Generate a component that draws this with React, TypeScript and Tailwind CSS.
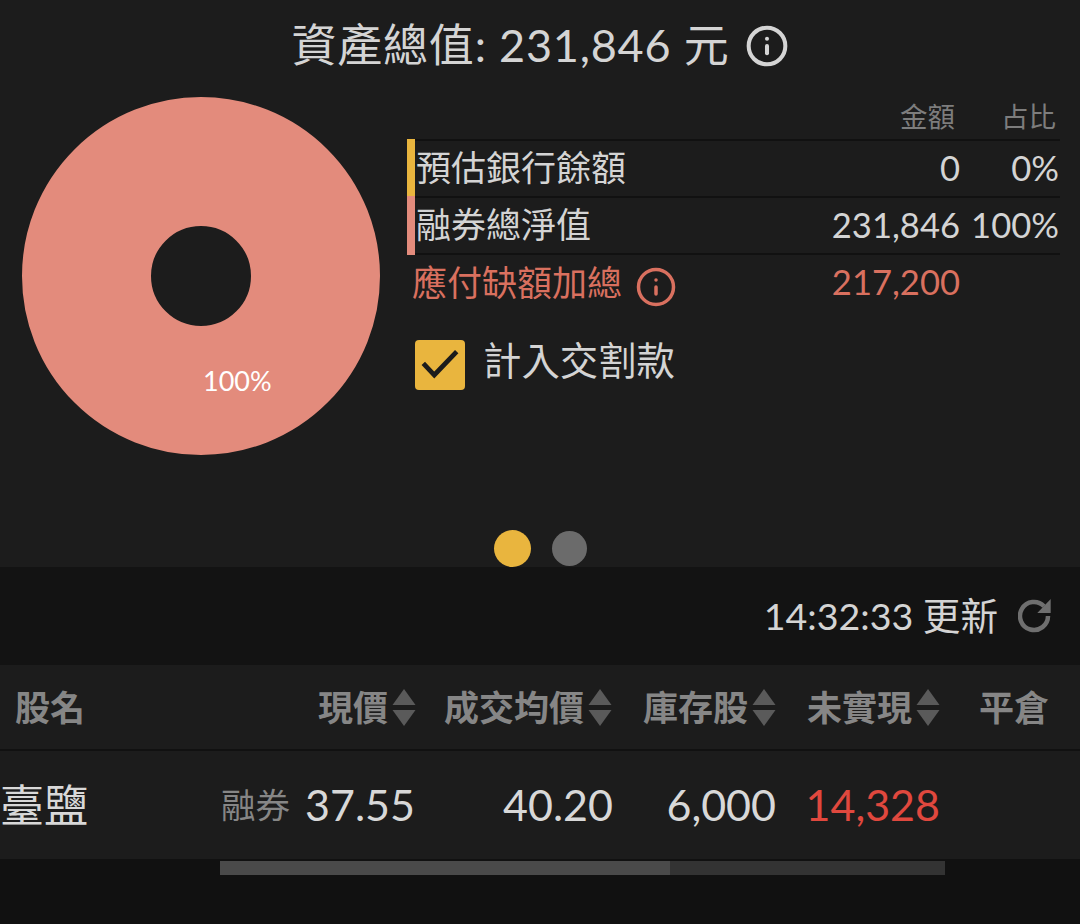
import { Info } from "lucide-react"

const font = "font-['Lato','Noto_Sans_CJK_TC',sans-serif]"

const columns = [
  { label: "現價", value: "37.55", valueClass: "text-[#d8d8d8] pr-[2px]" },
  { label: "成交均價", value: "40.20", valueClass: "text-[#d8d8d8]" },
  { label: "庫存股", value: "6,000", valueClass: "text-[#d8d8d8] pr-px" },
  { label: "未實現", value: "14,328", valueClass: "text-[#e0483e] pr-px" },
]

function SortArrows() {
  return (
    <svg width="26" height="38" viewBox="0 0 26 38" className="ml-[3px] shrink-0">
      <path d="M13 1 L24.5 17 L1.5 17 Z" fill="#5a5a5a" />
      <path d="M1.5 22 L24.5 22 L13 38 Z" fill="#5a5a5a" />
    </svg>
  )
}

function RefreshIcon() {
  return (
    <svg width="34" height="34" viewBox="0 0 34 34" className="ml-[20px] shrink-0">
      <path d="M26 7.2 A14 14 0 1 0 30 17" fill="none" stroke="#6f6f6f" strokeWidth="4.5" />
      <path d="M32.7 0 L32.7 14 L19.3 14 Z" fill="#6f6f6f" />
    </svg>
  )
}

function CheckMark() {
  return (
    <svg width="50" height="50" viewBox="0 0 50 50">
      <path d="M8.3 23.3 L19.3 35 L41.7 11.7" fill="none" stroke="#1c1c1c" strokeWidth="4.7" />
    </svg>
  )
}

function Donut() {
  return (
    <div className="relative h-[358px] w-[358px] shrink-0">
      <svg width="358" height="358" viewBox="0 0 358 358">
        <circle cx="179" cy="179" r="114.5" fill="none" stroke="#e38b7c" strokeWidth="129" />
      </svg>
      <span className="absolute left-[181px] top-[269px] text-[27px] leading-[30px] text-white">100%</span>
    </div>
  )
}

function AssetRow({ label, amount, ratio, barClass }: { label: string; amount: string; ratio: string; barClass: string }) {
  return (
    <div className="flex h-[57px] items-center border-t-2 border-[#111111]">
      <span className={`h-[59px] w-2 shrink-0 -my-px ${barClass}`} />
      <span className="ml-[1px] w-[401px] pb-[4px] text-[35px] leading-[48px] text-[#d4d4d4]">{label}</span>
      <span className="w-[143px] pb-[2px] text-right text-[34.6px] leading-[48px] text-[#d4d4d4]">{amount}</span>
      <span className="w-[99px] pb-[2px] text-right text-[34.6px] leading-[48px] text-[#d4d4d4]">{ratio}</span>
    </div>
  )
}

export default function App() {
  return (
    <div className={`flex h-[924px] w-[1080px] flex-col overflow-hidden bg-[#111111] ${font}`}>
      {/* Asset summary */}
      <section className="flex h-[567px] shrink-0 flex-col bg-[#1c1c1c]">
        <div className="flex h-[97px] items-start justify-center pt-[14px]">
          <h1 className="text-[45px] leading-[62px] font-normal tracking-[0.8px] text-[#d4d4d4]">資產總值: 231,846 元</h1>
          <Info size={44} strokeWidth={2.2} className="ml-[15px] mt-[10px] text-[#d4d4d4]" />
        </div>

        <div className="flex pl-[22px]">
          <Donut />
          <div className="ml-[27px] w-[653px]">
            <div className="flex h-[42px] items-start justify-end text-[27.5px] leading-[40px] text-[#7d7d7d]">
              <span>金額</span>
              <span className="ml-[46px] mr-[4px]">占比</span>
            </div>
            <AssetRow label="預估銀行餘額" amount="0" ratio="0%" barClass="bg-[#e9b53e]" />
            <AssetRow label="融券總淨值" amount="231,846" ratio="100%" barClass="bg-[#e38b7c]" />
            <div className="flex h-[60px] items-center border-t-2 border-[#111111] pl-[5px] text-[#d9705f]">
              <span className="pb-[4px] text-[35px] leading-[48px]">應付缺額加總</span>
              <Info size={42} strokeWidth={2} className="ml-[13px] mt-[6px] shrink-0" />
              <span className="ml-[153px] w-[130px] pb-[4px] text-right text-[34.6px] leading-[48px]">217,200</span>
            </div>
            <div className="mt-[27px] flex items-start pl-[8px]">
              <span className="h-[50px] w-[50px] shrink-0 overflow-hidden rounded-[4px] bg-[#e9b53e]">
                <CheckMark />
              </span>
              <span className="ml-[18px] -mt-[5px] text-[38.4px] leading-[50px] text-[#d4d4d4]">計入交割款</span>
            </div>
          </div>
        </div>

        <div className="mt-[75px] flex items-center justify-center gap-[21px] pl-[1px]">
          <span className="h-[37px] w-[37px] rounded-full bg-[#e9b53e]" />
          <span className="h-[35px] w-[35px] rounded-full bg-[#6b6b6b]" />
        </div>
      </section>

      {/* Update time */}
      <div className="flex h-[98px] shrink-0 items-center justify-end bg-[#131313] pr-[28px]">
        <span className="text-[37.6px] leading-[50px] text-[#d4d4d4]">14:32:33 更新</span>
        <RefreshIcon />
      </div>

      {/* Positions table */}
      <div className="grid h-[86px] shrink-0 grid-cols-[220px_197px_196px_164px_164px_139px] items-center border-b-2 border-[#111111] bg-[#1c1c1c] text-[35px] font-bold text-[#868686]">
        <span className="pl-[15px]">股名</span>
        {columns.map(c => (
          <div key={c.label} className="flex items-center justify-end">
            <span className="leading-[48px]">{c.label}</span>
            <SortArrows />
          </div>
        ))}
        <span className="pl-[38px]">平倉</span>
      </div>
      <div className="grid h-[110px] shrink-0 grid-cols-[220px_197px_196px_164px_164px_139px] items-center border-b-2 border-[#111111] bg-[#1c1c1c]">
        <span className="text-[44px] leading-[60px] text-[#d8d8d8]">臺鹽</span>
        <div className="flex items-center justify-between pl-[1px]">
          <span className="text-[34.5px] leading-[48px] text-[#868686]">融券</span>
          <span className={`text-[43px] leading-[56px] ${columns[0].valueClass}`}>{columns[0].value}</span>
        </div>
        {columns.slice(1).map(c => (
          <span key={c.label} className={`text-right text-[43px] leading-[56px] ${c.valueClass}`}>{c.value}</span>
        ))}
      </div>

      {/* Horizontal scrollbar */}
      <div className="ml-[220px] flex h-[14px] w-[725px] bg-[#333333]">
        <div className="h-full w-[450px] bg-[#4a4a4a]" />
      </div>
    </div>
  )
}
